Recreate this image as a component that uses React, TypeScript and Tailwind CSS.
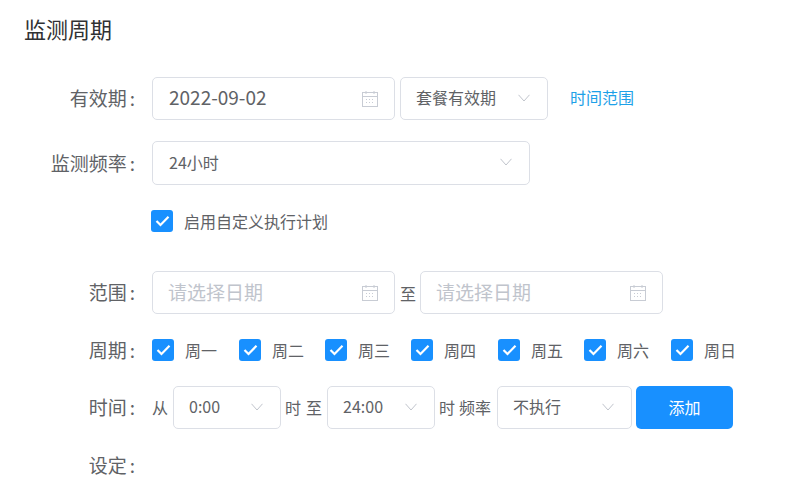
import React from 'react';

const font = '[font-family:"Noto_Sans_CJK_SC","Liberation_Sans",sans-serif]';

function CalendarIcon() {
  return (
    <svg width="18" height="18" viewBox="0 0 18 18" fill="none" stroke="#c8ccd4" strokeWidth="1" className="shrink-0">
      <rect x="1.5" y="2.5" width="15" height="14" />
      <path d="M1.5 6.5h15M5 1v3M13 1v3" />
      <path d="M5 9.5h2M8 9.5h2M11 9.5h2M5 12.5h2M8 12.5h2M11 12.5h2" strokeDasharray="1 1" />
    </svg>
  );
}

function Chevron() {
  return (
    <svg width="12" height="8" viewBox="0 0 12 8" fill="none" stroke="#c0c4cc" strokeWidth="1" className="mb-[2px] shrink-0">
      <path d="M0.5 0.8L6 7L11.5 0.8" />
    </svg>
  );
}

function Check() {
  return (
    <span className="flex h-[22px] w-[22px] shrink-0 items-center justify-center rounded-[3px] bg-[#1890ff]">
      <svg width="15" height="12" viewBox="0 0 15 12" fill="none" stroke="#fff" strokeWidth="2.2">
        <path d="M1.5 6l4 4L13.5 1.8" />
      </svg>
    </span>
  );
}

function DateBox({ value, placeholder }: { value?: string; placeholder?: string }) {
  return (
    <div className="flex h-[43px] w-[243px] items-center justify-between rounded-[5px] border border-[#dcdfe6] pl-[15px] pr-[15px]">
      <span className={value ? 'mb-[2px] ml-[1px] text-[19px] text-[#606266]' : 'text-[19px] text-[#c0c4cc]'}>{value || placeholder}</span>
      <CalendarIcon />
    </div>
  );
}

function SelectBox({ value, width, pad }: { value: string; width: string; pad: string }) {
  return (
    <div className={`flex h-[43px] items-center justify-between rounded-[5px] border border-[#dcdfe6] text-[16px] text-[#606266] ${width} ${pad}`}>
      <span className="mb-[3px]">{value}</span>
      <Chevron />
    </div>
  );
}

function Row({ label, className, children }: { label: string; className?: string; children?: React.ReactNode }) {
  return (
    <div className={`flex items-center ${className}`}>
      <span className="mb-[2px] w-[135px] shrink-0 text-right text-[19px] leading-none text-[#606266]">
        {label}
        <span className="ml-[3px]">:</span>
      </span>
      <div className="ml-[17px] flex items-center">{children}</div>
    </div>
  );
}

const days = [
  { label: '周一', width: 'w-[87px]' },
  { label: '周二', width: 'w-[86px]' },
  { label: '周三', width: 'w-[86px]' },
  { label: '周四', width: 'w-[87px]' },
  { label: '周五', width: 'w-[86px]' },
  { label: '周六', width: 'w-[87px]' },
  { label: '周日', width: 'w-[86px]' },
];

export default function App() {
  return (
    <div className={`h-[487px] w-[797px] overflow-hidden bg-white ${font}`}>
      <h2 className="pl-6 pt-[12px] text-[22px] leading-[32px] font-normal text-[#303133]">监测周期</h2>

      <Row label="有效期" className="mt-[33px]">
        <DateBox value="2022-09-02" />
        <div className="ml-[5px]">
          <SelectBox value="套餐有效期" width="w-[148px]" pad="pl-[15px] pr-[17px]" />
        </div>
        <span className="mb-[3px] ml-[22px] text-[16px] text-[#1da1e8]">时间范围</span>
      </Row>

      <Row label="监测频率" className="mt-[21px]">
        <div className="flex h-[44px] w-[378px] items-center justify-between rounded-[5px] border border-[#dcdfe6] pl-4 pr-[17px] text-[16px] text-[#606266]">
          <span className="mb-[2px]">24小时</span>
          <Chevron />
        </div>
      </Row>

      <div className="mt-[25px] flex items-center pl-[151px]">
        <Check />
        <span className="ml-[11px] text-[16px] leading-[22px] text-[#606266]">启用自定义执行计划</span>
      </div>

      <Row label="范围" className="mt-[39px]">
        <DateBox placeholder="请选择日期" />
        <span className="ml-[5px] w-[20px] text-[16px] text-[#606266]">至</span>
        <DateBox placeholder="请选择日期" />
      </Row>

      <Row label="周期" className="mt-[25px]">
        {days.map((d) => (
          <div key={d.label} className={`flex items-center ${d.width}`}>
            <Check />
            <span className="ml-[11px] text-[16px] leading-[22px] text-[#606266]">{d.label}</span>
          </div>
        ))}
      </Row>

      <Row label="时间" className="mt-[25px]">
        <span className="mb-[2px] text-[16px] text-[#606266]">从</span>
        <div className="ml-[5px]">
          <SelectBox value="0:00" width="w-[108px]" pad="pl-[15px] pr-[17px]" />
        </div>
        <span className="mb-[2px] ml-1 text-[16px] text-[#606266]">时</span>
        <span className="mb-[2px] ml-[5px] text-[16px] text-[#606266]">至</span>
        <div className="ml-[5px]">
          <SelectBox value="24:00" width="w-[108px]" pad="pl-[15px] pr-[17px]" />
        </div>
        <span className="mb-[2px] ml-1 text-[16px] text-[#606266]">时</span>
        <span className="mb-[2px] ml-[4px] text-[16px] text-[#606266]">频率</span>
        <div className="ml-[6px]">
          <SelectBox value="不执行" width="w-[135px]" pad="pl-[15px] pr-[17px]" />
        </div>
        <button className={`ml-1 h-[43px] w-[97px] rounded-[5px] bg-[#1890ff] pb-[2px] text-[16px] text-white ${font}`}>添加</button>
      </Row>

      <Row label="设定" className="mt-[26px]" />
    </div>
  );
}
